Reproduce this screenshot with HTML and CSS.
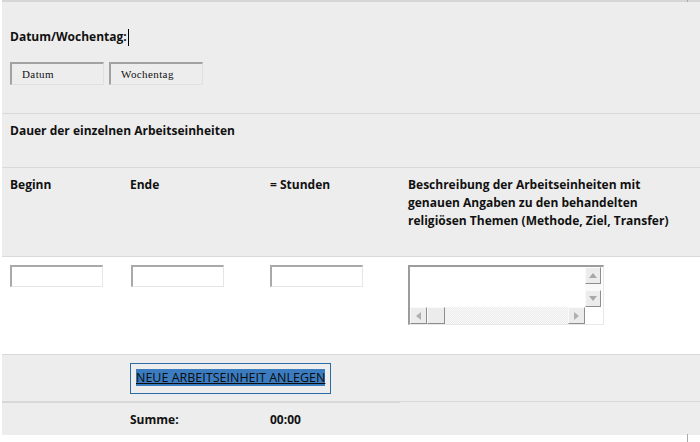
FILE: index.html
```html
<!DOCTYPE html>
<html lang="de">
<head>
<meta charset="utf-8">
<link rel="stylesheet" href="styles.css">
</head>
<body>
<div class="page">
  <div class="row row-date">
    <div class="title">Datum/Wochentag:<span class="caret"></span></div>
    <div class="date-inputs">
      <div class="field-gray">Datum</div>
      <div class="field-gray">Wochentag</div>
    </div>
  </div>
  <div class="row row-dauer">
    <div class="title">Dauer der einzelnen Arbeitseinheiten</div>
  </div>
  <div class="row row-head grid">
    <div class="th">Beginn</div>
    <div class="th">Ende</div>
    <div class="th">= Stunden</div>
    <div class="th">Beschreibung der Arbeitseinheiten mit<br>genauen Angaben zu den behandelten<br>religiösen Themen (Methode, Ziel, Transfer)</div>
  </div>
  <div class="row row-inputs grid">
    <div><div class="field-white"></div></div>
    <div class="c2"><div class="field-white"></div></div>
    <div><div class="field-white"></div></div>
    <div>
      <div class="textarea">
        <div class="ta-body">
          <div class="ta-text"></div>
          <div class="vscroll">
            <div class="sbtn"><svg width="8" height="5" viewBox="0 0 8 5"><path d="M0 5 L4 0 L8 5Z" fill="#a8a8a8"/></svg></div>
            <div class="vtrack"></div>
            <div class="sbtn"><svg width="8" height="5" viewBox="0 0 8 5"><path d="M0 0 L4 5 L8 0Z" fill="#a8a8a8"/></svg></div>
          </div>
        </div>
        <div class="ta-foot">
          <div class="hscroll">
            <div class="sbtn hb"><svg width="5" height="8" viewBox="0 0 5 8"><path d="M5 0 L0 4 L5 8Z" fill="#b0b0b0"/></svg></div>
            <div class="sbtn thumb"></div>
            <div class="htrack"></div>
            <div class="sbtn hb"><svg width="5" height="8" viewBox="0 0 5 8"><path d="M0 0 L5 4 L0 8Z" fill="#b0b0b0"/></svg></div>
          </div>
          <div class="corner"></div>
        </div>
      </div>
    </div>
  </div>
  <div class="row row-btn grid">
    <div></div>
    <div class="btn-cell"><span class="btn"><span class="sel">NEUE ARBEITSEINHEIT ANLEGEN</span></span></div>
  </div>
  <div class="row-sum">
    <div class="sum grid3">
      <div></div>
      <div class="th">Summe:</div>
      <div class="th">00:00</div>
    </div>
  </div>
</div>
<div class="edge edge-top"></div>
<div class="edge edge-bottom"></div>
</body>
</html>
```

FILE: styles.css
```css
html, body {
  margin: 0;
  padding: 0;
  background: #ffffff;
}
body {
  width: 700px;
  height: 442px;
  overflow: hidden;
  position: relative;
  font-family: "Open Sans", "Liberation Sans", sans-serif;
  color: #111;
}
.page {
  margin-left: 2px;
  border-top: 2px solid #d6d6d6;
  background: #ededed;
}
.row {
  border-bottom: 1px solid #d9d9d9;
  box-sizing: border-box;
}
.grid {
  display: grid;
  grid-template-columns: 120px 140px 138px 1fr;
}
.title {
  font-weight: 700;
  font-size: 12px;
  line-height: 18px;
  padding-left: 8px;
  display: flex;
  align-items: center;
}
.caret {
  display: inline-block;
  width: 1px;
  height: 17px;
  background: #000;
  margin-left: 1px;
}
.row-date {
  height: 112px;
  padding-top: 26px;
}
.date-inputs {
  display: flex;
  gap: 5px;
  padding-left: 8px;
  margin-top: 16px;
}
.field-gray {
  width: 91px;
  height: 20px;
  border-top: 2px solid #a2a2a2;
  border-left: 2px solid #a2a2a2;
  border-right: 1px solid #e0e0e0;
  border-bottom: 1px solid #e0e0e0;
  background: #ededed;
  font-family: "Liberation Serif", serif;
  font-size: 11px;
  line-height: 20px;
  text-indent: 10px;
  letter-spacing: 0.4px;
}
.row-dauer {
  height: 54px;
  padding-top: 8px;
}
.row-head {
  height: 89px;
  padding-top: 8px;
}
.th {
  font-weight: 700;
  font-size: 12px;
  line-height: 18px;
  padding-left: 8px;
}
.row-inputs {
  height: 98px;
  background: #ffffff;
  padding-top: 8px;
}
.row-inputs > div {
  padding-left: 8px;
}
.row-inputs > .c2 {
  padding-left: 9px;
}
.field-white {
  width: 90px;
  height: 19px;
  border-top: 2px solid #a9a9a9;
  border-left: 2px solid #a9a9a9;
  border-right: 1px solid #e6e6e6;
  border-bottom: 1px solid #e6e6e6;
  background: #fff;
}
.textarea {
  width: 193px;
  height: 57px;
  border-top: 2px solid #9c9c9c;
  border-left: 2px solid #9c9c9c;
  border-right: 1px solid #e8e8e8;
  border-bottom: 1px solid #e8e8e8;
  background: #fff;
  display: flex;
  flex-direction: column;
}
.ta-body {
  display: flex;
  flex: 1;
}
.ta-text {
  flex: 1;
}
.vscroll {
  width: 16px;
  display: flex;
  flex-direction: column;
  margin-right: 2px;
}
.sbtn {
  box-sizing: border-box;
  background: #ececec;
  border-top: 1px solid #fafafa;
  border-left: 1px solid #fafafa;
  border-right: 1px solid #8e8e8e;
  border-bottom: 1px solid #8e8e8e;
  display: flex;
  align-items: center;
  justify-content: center;
}
.vscroll .sbtn {
  height: 17px;
}
.vtrack {
  height: 6px;
  background: repeating-conic-gradient(#f4f4f4 0 25%, #ffffff 0 50%) 0 0 / 2px 2px;
}
.ta-foot {
  display: flex;
  height: 17px;
}
.hscroll {
  flex: 1;
  display: flex;
}
.hb {
  width: 17px;
}
.thumb {
  width: 18px;
}
.htrack {
  flex: 1;
  background: repeating-conic-gradient(#ececec 0 25%, #f9f9f9 0 50%) 0 0 / 2px 2px;
}
.corner {
  width: 18px;
  background: #fff;
}
.row-btn {
  height: 47px;
  padding-top: 8px;
}
.btn-cell {
  padding-left: 8px;
}
.btn {
  display: inline-block;
  border: 1px solid #2c6aa6;
  padding: 5px 5px 6px;
  font-family: "Open Sans", "Liberation Sans", sans-serif;
  font-size: 12.5px;
  line-height: 18px;
  white-space: nowrap;
}
.sel {
  background: #3b7cc0;
  color: #0b0b0b;
  text-decoration: underline;
}
.row-sum {
  height: 33px;
}
.sum {
  width: 398px;
  border-top: 1px solid #d6d6d6;
  padding-top: 8px;
  box-sizing: border-box;
  height: 33px;
}
.grid3 {
  display: grid;
  grid-template-columns: 120px 140px 138px;
}
.edge {
  position: absolute;
  left: 687px;
  width: 1px;
  background: #aaaaaa;
}
.edge-top {
  top: 0;
  height: 2px;
}
.edge-bottom {
  top: 434px;
  height: 8px;
}
```
